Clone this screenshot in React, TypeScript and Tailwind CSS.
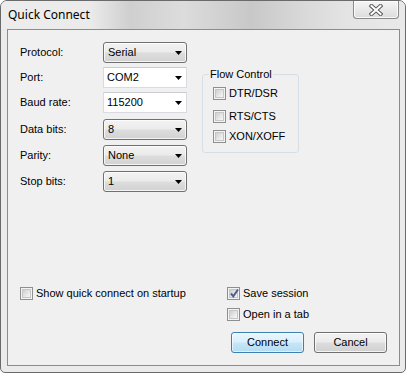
import React from "react";

const font = "font-['Liberation_Sans',Arial,sans-serif] text-[11px] leading-[13px] text-black";

function Arrow() {
  return (
    <svg width="7" height="4" viewBox="0 0 7 4" className="shrink-0">
      <path d="M0 0 H7 L3.5 4 Z" fill="#000" />
    </svg>
  );
}

function DropCombo({ value }: { value: string }) {
  return (
    <div className="w-[84px] h-[21px] rounded-[3px] border border-[#707070] bg-[linear-gradient(180deg,#f3f3f3_0%,#ebebeb_48%,#dddddd_52%,#d2d2d2_100%)] shadow-[inset_0_0_0_1px_rgba(255,255,255,0.75)] flex items-center pl-[4px] pr-[4px] justify-between">
      <span>{value}</span>
      <Arrow />
    </div>
  );
}

function EditCombo({ value }: { value: string }) {
  return (
    <div className="w-[84px] h-[21px] border border-[#d9dbe0] border-t-[#c9cbd1] bg-white flex items-center pl-[3px] pr-[4px] justify-between">
      <span>{value}</span>
      <Arrow />
    </div>
  );
}

function Check({ checked = false, label }: { checked?: boolean; label: string }) {
  return (
    <div className="flex items-center gap-[3px] h-[13px]">
      <div className="w-[13px] h-[13px] border border-[#8e8f8f] bg-[#f4f4f4] p-[1px] shrink-0">
        <div className="w-full h-full border border-[#c6c6c6] bg-[linear-gradient(135deg,#cfcfcf_0%,#e6e6e6_55%,#f8f8f8_100%)] relative">
          {checked && (
            <svg width="11" height="11" viewBox="0 0 11 11" className="absolute -left-[1px] -top-[2px]">
              <path d="M2 5.5 L4.3 8.3 L9 1.5" fill="none" stroke="#4c5f8c" strokeWidth="2" strokeLinejoin="miter" />
            </svg>
          )}
        </div>
      </div>
      <span>{label}</span>
    </div>
  );
}

function Row({ label, children, mt }: { label: string; children: React.ReactNode; mt: string }) {
  return (
    <div className={`flex items-center h-[21px] ${mt}`}>
      <div className="w-[83px]">{label}</div>
      {children}
    </div>
  );
}

function Button({ label, def = false }: { label: string; def?: boolean }) {
  return (
    <div
      className={
        def
          ? "w-[73px] h-[21px] rounded-[3px] border border-[#3c7fb1] bg-[linear-gradient(180deg,#eaf6fd_0%,#d9f0fc_48%,#c6e6f7_52%,#b5dcf1_100%)] shadow-[inset_0_0_0_1px_rgba(255,255,255,0.6)] flex items-center justify-center"
          : "w-[73px] h-[21px] rounded-[3px] border border-[#707070] bg-[linear-gradient(180deg,#f3f3f3_0%,#ebebeb_48%,#dddddd_52%,#d0d0d0_100%)] shadow-[inset_0_0_0_1px_rgba(255,255,255,0.75)] flex items-center justify-center"
      }
    >
      {label}
    </div>
  );
}

export default function App() {
  return (
    <div className="w-[408px] h-[374px] bg-white">
      <div className="w-[406px] h-[373px] rounded-t-[7px] rounded-b-[5px] border border-[#6a6a6a] bg-[#ebebeb] flex flex-col overflow-hidden">
        {/* Title bar */}
        <div className="h-[28px] shrink-0 flex items-start bg-[linear-gradient(90deg,#ececec_0%,#ebebeb_22%,#cfcfcf_32%,#dcdcdc_45%,#c8c8c8_62%,#d9d9d9_75%,#e4e4e4_86%,#e9e9e9_100%)]">
          <div className="pl-[7px] pt-[5px] font-['Noto_Sans','Open_Sans',sans-serif] text-[12px] leading-[17px] text-black">
            Quick Connect
          </div>
          <div className="ml-auto mr-[6px] w-[46px] h-[18px] rounded-b-[4px] border border-t-0 border-[#8a8a8a] bg-[linear-gradient(180deg,#f6f6f6_0%,#e9e9e9_50%,#dcdcdc_100%)] shadow-[inset_0_0_0_1px_rgba(255,255,255,0.8)] flex items-center justify-center">
            <svg width="14" height="12" viewBox="0 0 14 12">
              <path d="M2.5 2 L11.5 10 M11.5 2 L2.5 10" stroke="#5a5a5a" strokeWidth="4" strokeLinecap="square" />
              <path d="M2.5 2 L11.5 10 M11.5 2 L2.5 10" stroke="#ffffff" strokeWidth="2" strokeLinecap="square" />
            </svg>
          </div>
        </div>
        {/* Body with frame */}
        <div className="flex-1 pl-[6px] pr-[5px] pb-[6px] flex">
          <div className={`flex-1 border border-[#8c8c8c] bg-[#f0f0f0] pl-[12px] pt-[12px] ${font}`}>
            <div className="flex items-start">
              <div className="flex flex-col">
                <Row label="Protocol:" mt="">
                  <DropCombo value="Serial" />
                </Row>
                <Row label="Port:" mt="mt-[4px]">
                  <EditCombo value="COM2" />
                </Row>
                <Row label="Baud rate:" mt="mt-[4px]">
                  <EditCombo value="115200" />
                </Row>
                <Row label="Data bits:" mt="mt-[6px]">
                  <DropCombo value="8" />
                </Row>
                <Row label="Parity:" mt="mt-[5px]">
                  <DropCombo value="None" />
                </Row>
                <Row label="Stop bits:" mt="mt-[5px]">
                  <DropCombo value="1" />
                </Row>
              </div>
              <fieldset className="ml-[15px] mt-[26px] w-[97px] border border-[#d5dfe5] rounded-[3px] px-[6px] pb-[9px]">
                <legend className="px-[1px] leading-[13px]">Flow Control</legend>
                <div className="ml-[4px] flex flex-col">
                  <div className="mt-[6px]">
                    <Check label="DTR/DSR" />
                  </div>
                  <div className="mt-[10px]">
                    <Check label="RTS/CTS" />
                  </div>
                  <div className="mt-[7px]">
                    <Check label="XON/XOFF" />
                  </div>
                </div>
              </fieldset>
            </div>
            <div className="mt-[95px] flex">
              <div className="w-[207px]">
                <Check label="Show quick connect on startup" />
              </div>
              <div className="flex flex-col">
                <Check checked label="Save session" />
                <div className="mt-[8px]">
                  <Check label="Open in a tab" />
                </div>
              </div>
            </div>
            <div className="mt-[11px] pl-[211px] flex gap-[10px]">
              <Button label="Connect" def />
              <Button label="Cancel" />
            </div>
          </div>
        </div>
      </div>
    </div>
  );
}
